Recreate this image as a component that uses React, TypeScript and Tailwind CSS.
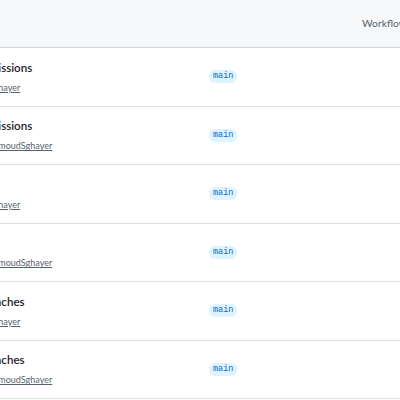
interface Run {
  title: string;
  workflow: string;
  number: number;
  branch: string;
}

const runs: Run[] = [
  { title: "Update workflow permissions", workflow: "CI", number: 6, branch: "main" },
  { title: "Update workflow permissions", workflow: "Release", number: 106, branch: "main" },
  { title: "Initial commit", workflow: "CI", number: 5, branch: "main" },
  { title: "Initial commit", workflow: "Release", number: 105, branch: "main" },
  { title: "Add support for all branches", workflow: "CI", number: 4, branch: "main" },
  { title: "Add support for all branches", workflow: "Release", number: 104, branch: "main" },
];

export default function App() {
  return (
    <div
      className="h-[400px] w-[400px] overflow-hidden bg-white text-[#1f2328]"
      style={{ fontFamily: "Lato, sans-serif" }}
    >
      {/* table is scrolled sideways: its left part is out of view */}
      <div className="-ml-[136px] w-[700px]">
        <div className="flex h-[48px] items-center border-b border-[#d1d9e0] bg-[#f6f8fa] pt-[1px] text-[10.3px] text-[#59636e]">
          <div className="w-[345px] pl-4">Workflow runs</div>
          <div className="w-[153px]" />
          <div>Workflow</div>
        </div>
        {runs.map((run, i) => (
          <RunRow key={i} run={run} />
        ))}
      </div>
    </div>
  );
}

function RunRow({ run }: { run: Run }) {
  return (
    <div className="flex h-[58.5px] items-center border-b border-[#d8dee4]">
      <div className="flex w-[345px] flex-col pl-4">
        <div className="text-[11.6px] font-semibold leading-[18px]">{run.title}</div>
        <div className="mt-[4px] text-[9px] leading-[14px] text-[#59636e]">
          {run.workflow} #{run.number}: pushed by{" "}
          <span className="underline">MahmoudSghayer</span>
        </div>
      </div>
      <div className="flex w-[153px] items-center">
        <span className="inline-block rounded-md bg-[#ddf4ff] px-[4px] py-[1px] font-mono text-[8.5px] leading-[11px] text-[#0969da]">
          {run.branch}
        </span>
      </div>
    </div>
  );
}
